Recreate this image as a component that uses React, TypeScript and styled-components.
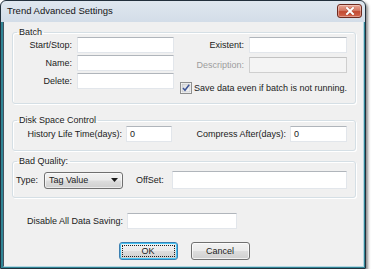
import React from "react";
import styled, { createGlobalStyle } from "styled-components";

const Global = createGlobalStyle`
  html, body { margin: 0; padding: 0; background: #ffffff; }
  body { font-family: "Liberation Sans", Arial, sans-serif; font-size: 9px; color: #1b1b1b; }
  * { box-sizing: border-box; }
`;

const Window = styled.div`
  width: 366px;
  height: 269px;
  border: 1px solid #22303c;
  border-radius: 6px 6px 0 0;
  padding: 0 1px 1px 2px;
  background: linear-gradient(to bottom, #dfe7ef 0px, #d3dde8 21px, #2f8494 21px, #2f8494 100%);
  box-shadow: 2px 2px 3px rgba(0, 0, 0, 0.45);
  display: flex;
  flex-direction: column;
`;

const TitleBar = styled.div`
  height: 21px;
  flex: none;
  display: flex;
  align-items: center;
  justify-content: space-between;
  padding: 0 2px 2px 4px;
`;

const Title = styled.span`
  font-size: 9.5px;
  color: #141414;
`;

const CloseButton = styled.div`
  width: 25px;
  height: 14px;
  border: 1px solid #6e2a1f;
  border-radius: 3px;
  background: linear-gradient(to bottom, #e8a493 0%, #d47a66 45%, #c24a32 55%, #d2674f 100%);
  box-shadow: inset 0 0 0 1px rgba(255, 255, 255, 0.35);
  display: flex;
  align-items: center;
  justify-content: center;
`;

const Client = styled.div`
  flex: 1;
  background: #f0f0f0;
  border-left: 1px solid #46515e;
  border-right: 1px solid #b4d6e2;
  border-bottom: 1px solid #b4d6e2;
  padding: 5px 7px 0 8px;
  display: flex;
  flex-direction: column;
`;

const Group = styled.fieldset<{ $mt?: number }>`
  margin: ${(p) => p.$mt ?? 0}px 0 0 0;
  border: 1px solid #d5dfe5;
  border-radius: 3px;
  box-shadow: inset 1px 1px 0 #ffffff, 1px 1px 0 #ffffff;
  padding: 0 8px 0 1px;
  min-width: 0;
`;

const Legend = styled.legend`
  font-size: 9px;
  line-height: 10px;
  padding: 0 2px;
  margin-left: 3px;
  color: #1b1b1b;
`;

const BatchBody = styled.div`
  display: flex;
  justify-content: space-between;
  padding-bottom: 9px;
`;

const LeftFields = styled.div`
  display: grid;
  grid-template-columns: 58px 97px;
  grid-auto-rows: 16px;
  row-gap: 2px;
  column-gap: 5px;
  align-items: center;
`;

const RightFields = styled.div`
  display: flex;
  flex-direction: column;
  align-items: flex-end;
`;

const FieldRow = styled.div<{ $mt?: number }>`
  display: flex;
  align-items: center;
  gap: 5px;
  margin-top: ${(p) => p.$mt ?? 0}px;
`;

const Label = styled.span<{ $disabled?: boolean }>`
  text-align: right;
  white-space: nowrap;
  color: ${(p) => (p.$disabled ? "#9d9d9d" : "#1b1b1b")};
`;

const Input = styled.div<{ $w?: number; $h?: number; $disabled?: boolean; $grow?: boolean }>`
  width: ${(p) => (p.$w ? `${p.$w}px` : "auto")};
  height: ${(p) => p.$h ?? 16}px;
  flex: ${(p) => (p.$grow ? 1 : "none")};
  margin-left: ${(p) => (p.$grow ? 8 : 0)}px;
  background: ${(p) => (p.$disabled ? "#f4f4f4" : "#ffffff")};
  border: 1px solid ${(p) => (p.$disabled ? "#cfcfcf" : "#e2e6eb")};
  border-top-color: ${(p) => (p.$disabled ? "#c2c2c2" : "#b0b5bb")};
  display: flex;
  align-items: center;
  padding-left: 3px;
  font-size: 9px;
`;

const CheckRow = styled.label`
  display: flex;
  align-items: center;
  gap: 2px;
  margin-top: 9px;
  white-space: nowrap;
`;

const DiskBody = styled.div`
  display: grid;
  grid-template-columns: 108px 46px 1fr 57px;
  column-gap: 4px;
  align-items: center;
  padding: 1px 0 8px 0;
`;

const QualityBody = styled.div`
  display: flex;
  align-items: center;
  padding: 5px 0 8px 2px;
`;

const Select = styled.div`
  width: 79px;
  height: 17px;
  margin: 0 13px 0 6px;
  border: 1px solid #707070;
  border-radius: 3px;
  background: linear-gradient(to bottom, #f2f2f2 0%, #ebebeb 48%, #dddddd 52%, #cfcfcf 100%);
  box-shadow: inset 0 0 0 1px rgba(255, 255, 255, 0.6);
  display: flex;
  align-items: center;
  justify-content: space-between;
  padding: 0 4px 0 4px;
`;

const BottomRow = styled.div`
  display: grid;
  grid-template-columns: 111px 110px;
  column-gap: 4px;
  align-items: center;
  margin-top: 15px;
`;

const ButtonRow = styled.div`
  display: flex;
  justify-content: center;
  gap: 13px;
  margin-top: 13px;
`;

const Button = styled.div<{ $default?: boolean }>`
  position: relative;
  width: 59px;
  height: 18px;
  border: 1px solid ${(p) => (p.$default ? "#3c7fb1" : "#707070")};
  border-radius: 3px;
  background: linear-gradient(to bottom, #f2f2f2 0%, #ebebeb 48%, #dddddd 52%, #cfcfcf 100%);
  box-shadow: ${(p) =>
    p.$default ? "inset 0 0 0 1px #48c6f5" : "inset 0 0 0 1px rgba(255,255,255,0.7)"};
  display: flex;
  align-items: center;
  justify-content: center;
  font-size: 9px;
  &::after {
    content: "";
    display: ${(p) => (p.$default ? "block" : "none")};
    position: absolute;
    inset: 2px;
    border: 1px dotted #222;
  }
`;

const CheckBox = () => (
  <svg width="12" height="12" viewBox="0 0 12 12">
    <defs>
      <linearGradient id="cbg" x1="0" y1="0" x2="1" y2="1">
        <stop offset="0" stopColor="#d9dadb" />
        <stop offset="1" stopColor="#f7f7f7" />
      </linearGradient>
    </defs>
    <rect x="0.5" y="0.5" width="11" height="11" fill="#fff" stroke="#8e8f8f" />
    <rect x="2" y="2" width="8" height="8" fill="url(#cbg)" stroke="#b5b9bd" strokeWidth="0.6" />
    <path d="M3 6 L5 8.3 L9.2 2.8" fill="none" stroke="#3c5496" strokeWidth="1.5" />
  </svg>
);

const CloseX = () => (
  <svg width="10" height="8" viewBox="0 0 10 8">
    <path d="M2 1 L8 7 M8 1 L2 7" stroke="#5b1d12" strokeWidth="3" strokeLinecap="round" opacity="0.35" />
    <path d="M2 1 L8 7 M8 1 L2 7" stroke="#ffffff" strokeWidth="2" strokeLinecap="square" />
  </svg>
);

const Arrow = () => (
  <svg width="7" height="4" viewBox="0 0 7 4">
    <path d="M0 0 H7 L3.5 4 Z" fill="#1b1b1b" />
  </svg>
);

export default function App() {
  return (
    <>
      <Global />
      <Window>
        <TitleBar>
          <Title>Trend Advanced Settings</Title>
          <CloseButton>
            <CloseX />
          </CloseButton>
        </TitleBar>
        <Client>
          <Group>
            <Legend>Batch</Legend>
            <BatchBody>
              <LeftFields>
                <Label>Start/Stop:</Label>
                <Input />
                <Label>Name:</Label>
                <Input />
                <Label>Delete:</Label>
                <Input />
              </LeftFields>
              <RightFields>
                <FieldRow>
                  <Label>Existent:</Label>
                  <Input $w={98} />
                </FieldRow>
                <FieldRow $mt={4}>
                  <Label $disabled>Description:</Label>
                  <Input $w={98} $disabled />
                </FieldRow>
                <CheckRow>
                  <CheckBox />
                  <span>Save data even if batch is not running.</span>
                </CheckRow>
              </RightFields>
            </BatchBody>
          </Group>
          <Group $mt={11}>
            <Legend>Disk Space Control</Legend>
            <DiskBody>
              <Label>History Life Time(days):</Label>
              <Input>0</Input>
              <Label>Compress After(days):</Label>
              <Input>0</Input>
            </DiskBody>
          </Group>
          <Group $mt={5}>
            <Legend>Bad Quality:</Legend>
            <QualityBody>
              <Label>Type:</Label>
              <Select>
                <span>Tag Value</span>
                <Arrow />
              </Select>
              <Label>OffSet:</Label>
              <Input $h={18} $grow />
            </QualityBody>
          </Group>
          <BottomRow>
            <Label>Disable All Data Saving:</Label>
            <Input />
          </BottomRow>
          <ButtonRow>
            <Button $default>OK</Button>
            <Button>Cancel</Button>
          </ButtonRow>
        </Client>
      </Window>
    </>
  );
}
